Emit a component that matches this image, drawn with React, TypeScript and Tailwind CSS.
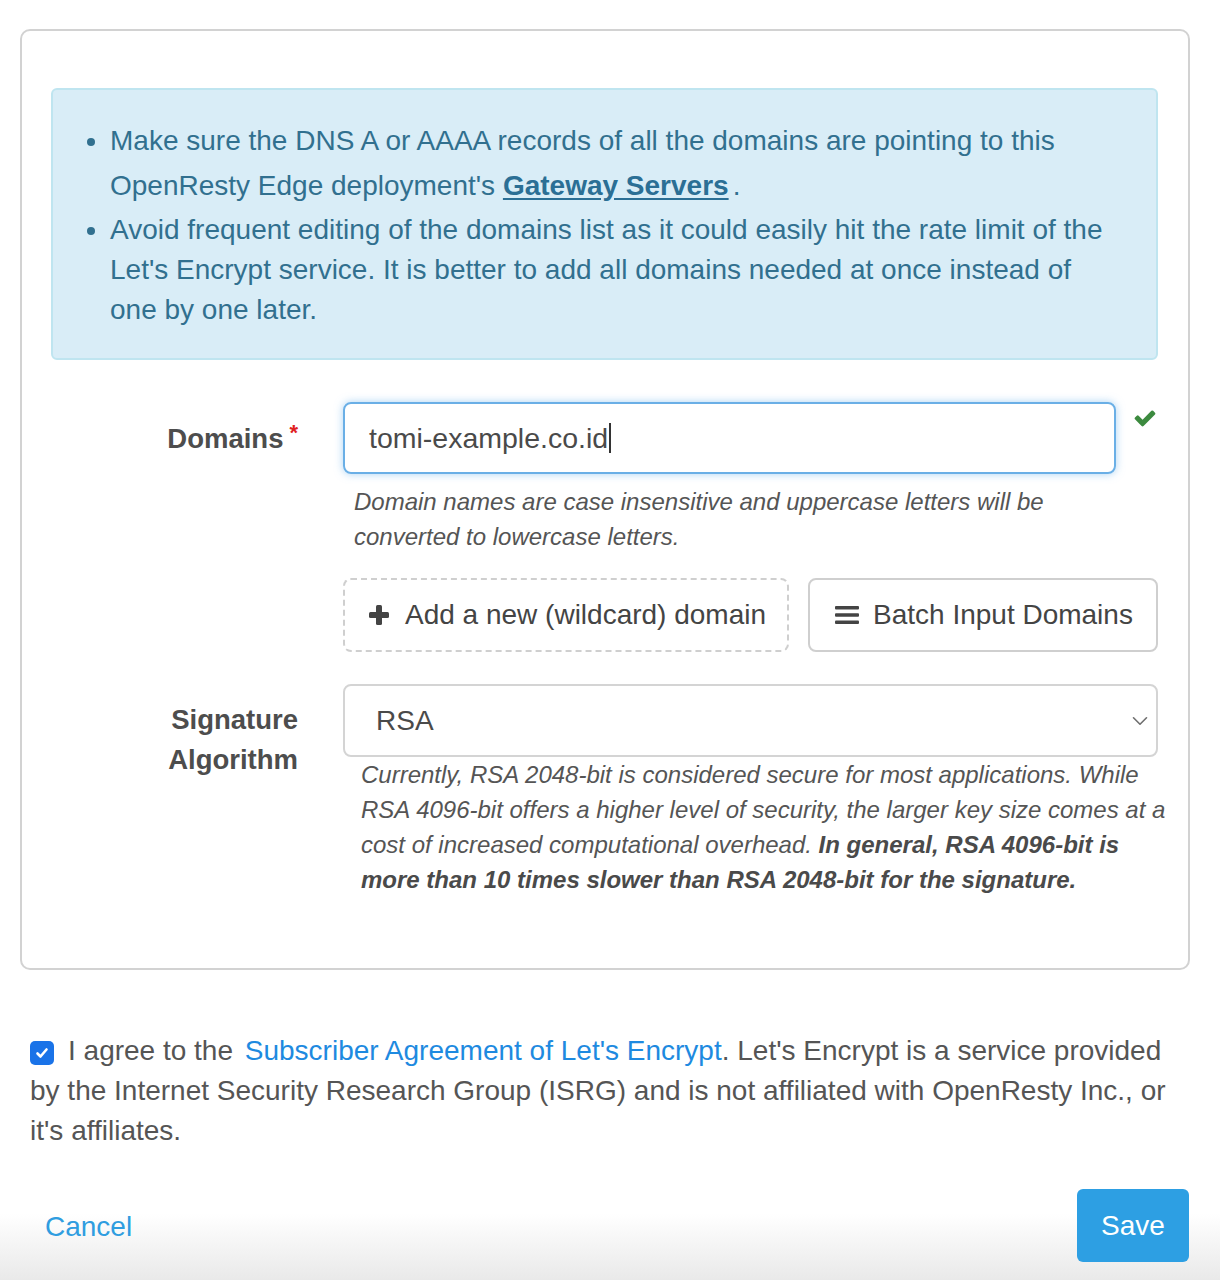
import { ChevronDown } from "lucide-react";

const font = { fontFamily: '"Liberation Sans", Arial, Helvetica, sans-serif' };

function CheckIcon({ className }: { className?: string }) {
  return (
    <svg viewBox="0 0 1792 1792" className={className} fill="currentColor">
      <path d="M1671 566q0 40-28 68l-724 724-136 136q-28 28-68 28t-68-28l-136-136-362-362q-28-28-28-68t28-68l136-136q28-28 68-28t68 28l294 295 656-657q28-28 68-28t68 28l136 136q28 28 28 68z" />
    </svg>
  );
}

function PlusIcon() {
  return (
    <svg viewBox="0 0 20 20" className="h-[20px] w-[20px]" fill="currentColor">
      <rect x="7" y="0" width="6" height="20" rx="1.5" />
      <rect x="0" y="7" width="20" height="6" rx="1.5" />
    </svg>
  );
}

function BarsIcon() {
  return (
    <svg viewBox="0 0 24 20" className="h-[20px] w-[24px]" fill="currentColor">
      <rect x="0" y="1" width="24" height="3.5" rx="1" />
      <rect x="0" y="8.25" width="24" height="3.5" rx="1" />
      <rect x="0" y="15.5" width="24" height="3.5" rx="1" />
    </svg>
  );
}

export default function App() {
  return (
    <div className="relative h-[1280px] w-[1220px] overflow-hidden bg-white" style={font}>
      <div className="pl-[20px] pt-[29px]">
        <div className="w-[1170px] rounded-[10px] border-2 border-[#d2d2d2] pb-[71px] pl-[29px] pr-[30px] pt-[57px]">
          {/* notice */}
          <div className="h-[272px] rounded-[6px] border-2 border-[#bfe5f0] bg-[#d9edf7] pl-[33px] pt-[28px] text-[28px] text-[#31708f]">
            <ul className="list-disc pl-[24px] marker:text-[#31708f]">
              <li className="leading-[45px]">
                Make sure the DNS A or AAAA records of all the domains are pointing to this
                <br />
                OpenResty Edge deployment's{" "}
                <a className="font-bold text-[#2b6f95] underline underline-offset-[3px]">Gateway Servers</a>
                <span className="ml-[4px]">.</span>
              </li>
              <li className="mt-[2px] leading-[40px]">
                Avoid frequent editing of the domains list as it could easily hit the rate limit of the
                <br />
                Let's Encrypt service. It is better to add all domains needed at once instead of
                <br />
                one by one later.
              </li>
            </ul>
          </div>

          {/* domains */}
          <div className="mt-[42px] flex">
            <div className="w-[249px] shrink-0 pr-[2px] pt-[17px] text-right text-[27.5px] font-bold leading-[40px] text-[#4d4d4d]">
              Domains
              <span className="relative top-[-8px] ml-[6px] text-[22px] font-bold text-[#e0201e]">*</span>
            </div>
            <div className="ml-[43px] w-[815px]">
              <div className="flex items-start">
                <div className="flex h-[72px] w-[773px] items-center rounded-[8px] border-2 border-[#6aafe6] pl-[24px] text-[28.5px] text-[#4a4a4a] shadow-[0_0_8px_rgba(102,175,233,0.55)]">
                  tomi-example.co.id<span className="ml-[1px] inline-block h-[30px] w-[2px] bg-[#333]" />
                </div>
                <CheckIcon className="ml-[17px] mt-[4px] h-[24px] w-[24px] text-[#3c8a3f]" />
              </div>
              <p className="ml-[11px] mt-[10px] text-[24px] italic leading-[35px] text-[#555]">
                Domain names are case insensitive and uppercase letters will be
                <br />
                converted to lowercase letters.
              </p>
              <div className="mt-[24px] flex gap-[19px]">
                <button className="flex h-[74px] w-[446px] items-center gap-[16px] rounded-[8px] border-2 border-dashed border-[#cfcfcf] pl-[24px] text-[28px] text-[#444]">
                  <PlusIcon />
                  Add a new (wildcard) domain
                </button>
                <button className="flex h-[74px] w-[350px] items-center gap-[14px] rounded-[8px] border-2 border-[#cfcfcf] pl-[25px] text-[28px] text-[#444]">
                  <BarsIcon />
                  Batch Input Domains
                </button>
              </div>
            </div>
          </div>

          {/* signature algorithm */}
          <div className="mt-[32px] flex">
            <div className="w-[249px] shrink-0 pr-[2px] pt-[16px] text-right text-[27.5px] font-bold leading-[40px] text-[#4d4d4d]">
              Signature
              <br />
              Algorithm
            </div>
            <div className="ml-[43px] w-[815px]">
              <div className="flex h-[73px] items-center justify-between rounded-[8px] border-2 border-[#d4d4d4] pl-[31px] pr-[3px] text-[28px] text-[#4a4a4a]">
                RSA
                <ChevronDown className="h-[26px] w-[26px] text-[#6f6f6f]" strokeWidth={1.5} />
              </div>
              <p className="ml-[18px] w-[850px] text-[24px] italic leading-[35px] text-[#555]">
                Currently, RSA 2048-bit is considered secure for most applications. While
                <br />
                RSA 4096-bit offers a higher level of security, the larger key size comes at a
                <br />
                cost of increased computational overhead.{" "}
                <b className="text-[#4a4a4a]">In general, RSA 4096-bit is</b>
                <br />
                <b className="text-[#4a4a4a]">more than 10 times slower than RSA 2048-bit for the signature.</b>
              </p>
            </div>
          </div>
        </div>
      </div>

      {/* agreement */}
      <div className="mt-[61px] pl-[30px] text-[28px] leading-[40px] text-[#555]">
        <span className="relative top-[1px] mr-[14px] inline-flex h-[24px] w-[24px] items-center justify-center rounded-[5px] bg-[#1a73e8]">
          <svg viewBox="0 0 16 16" className="h-[16px] w-[16px]" fill="none" stroke="white" strokeWidth="2.6" strokeLinecap="round" strokeLinejoin="round">
            <path d="M3.5 8.5l3 3 6-7" />
          </svg>
        </span>
        I agree to the <a className="ml-[4px] text-[#1e8ae0]">Subscriber Agreement of Let's Encrypt</a>. Let's Encrypt is a service provided
        <br />
        by the Internet Security Research Group (ISRG) and is not affiliated with OpenResty Inc., or
        <br />
        it's affiliates.
      </div>

      {/* footer */}
      <div className="absolute bottom-0 left-0 flex h-[110px] w-[1220px] items-start justify-between bg-gradient-to-b from-white from-40% to-[#e9e9e9] pl-[45px] pr-[31px] pt-[19px]">
        <a className="mt-[20px] text-[28px] leading-[36px] text-[#2f9de0]">Cancel</a>
        <button className="h-[73px] w-[112px] rounded-[6px] bg-[#2d9fe3] text-[28px] text-white">Save</button>
      </div>
    </div>
  );
}
